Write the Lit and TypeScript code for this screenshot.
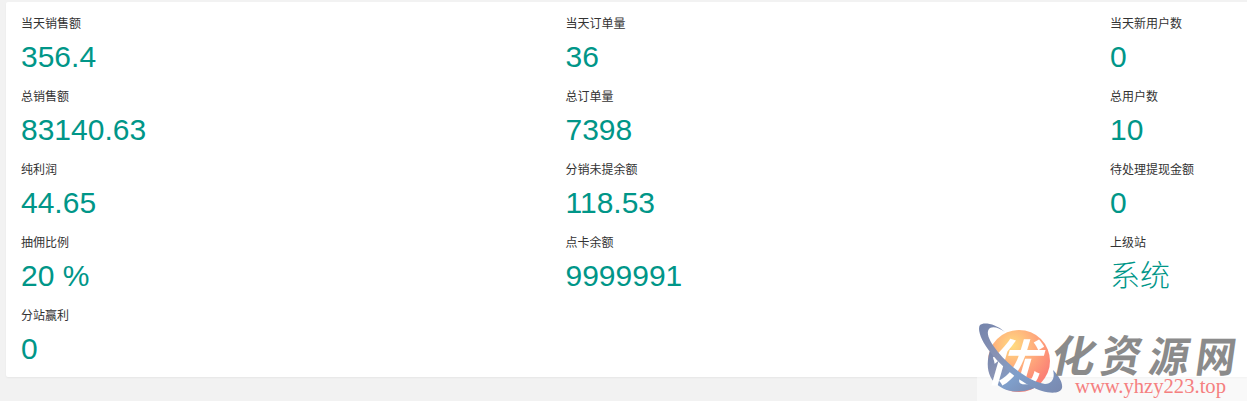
import { LitElement, html, css } from 'lit';

class StatItem extends LitElement {
  static properties = {
    label: { type: String },
    value: { type: String },
  };

  static styles = css`
    :host {
      display: block;
      height: 73px;
    }

    .label {
      font-size: 12px;
      line-height: 18px;
      color: #333;
    }

    .value {
      margin-top: 6px;
      font-size: 30px;
      line-height: 36px;
      font-weight: 300;
      color: #009688;
    }
  `;
  label: string;
  value: string;

  constructor() {
    super();
    this.label = '';
    this.value = '';
  }

  render() {
    return html`
      <div class="label">${this.label}</div>
      <div class="value">${this.value}</div>
    `;
  }
}

customElements.define('stat-item', StatItem);

class SiteWatermark extends LitElement {
  static styles = css`
    :host {
      display: block;
      background: rgba(255, 255, 255, 0.5);
    }

    svg {
      display: block;
    }

    .name {
      font-family: 'Noto Sans CJK SC', sans-serif;
      font-weight: 700;
      font-size: 40px;
      fill: #8b8b8b;
    }

    .mark {
      font-family: 'Noto Sans CJK SC', sans-serif;
      font-weight: 700;
      font-size: 50px;
      fill: #fff;
    }

    .url {
      font-family: 'Liberation Serif', serif;
      font-size: 22px;
      fill: #f58080;
    }
  `;

  render() {
    return html`
      <svg width="270" height="86" viewBox="0 0 270 86">
        <defs>
          <radialGradient id="sun" cx="0.4" cy="0.25" r="0.7">
            <stop offset="0" stop-color="#ffdc80" />
            <stop offset="0.5" stop-color="#ffad7c" />
            <stop offset="1" stop-color="#fb8175" />
          </radialGradient>
          <linearGradient id="ring" x1="0" y1="0" x2="1" y2="1">
            <stop offset="0" stop-color="#7484ac" />
            <stop offset="0.35" stop-color="#8993b4" />
            <stop offset="0.6" stop-color="#7f9fcb" />
            <stop offset="1" stop-color="#7988ae" />
          </linearGradient>
        </defs>
        <circle cx="42" cy="46" r="31" fill="url(#sun)" />
        <path d="M14 33C8 48 10 64 22 71C34 80 54 77 64 69C45 66 25 51 14 33Z" fill="url(#ring)" />
        <text class="mark" transform="translate(8 66) skewX(-16) scale(1.08 1)">优</text>
        <path
          d="M28 17C18 8 6 7 3 10C0 14 4 26 14 38C27 55 49 71 65 76C75 79 84 78 85 73C86 68 82 61 76 55C78 62 76 69 68 69C54 67 34 53 21 37C12 26 8 17 13 13C17 11 22 13 28 17Z"
          fill="url(#ring)"
        />
        <g class="name">
          <text transform="translate(72 57) skewX(-12) scale(1.1 1.08)">化</text>
          <text transform="translate(122 57) skewX(-10) scale(1 1.1)">资</text>
          <text transform="translate(170 57) skewX(-10) scale(1 1.05)">源</text>
          <text transform="translate(217 57) skewX(-8) scale(1 1.05)">网</text>
        </g>
        <text class="url" x="98" y="78" textLength="151" lengthAdjust="spacingAndGlyphs">www.yhzy223.top</text>
      </svg>
    `;
  }
}

customElements.define('site-watermark', SiteWatermark);

const stats = [
  ['当天销售额', '356.4'],
  ['当天订单量', '36'],
  ['当天新用户数', '0'],
  ['总销售额', '83140.63'],
  ['总订单量', '7398'],
  ['总用户数', '10'],
  ['纯利润', '44.65'],
  ['分销未提余额', '118.53'],
  ['待处理提现金额', '0'],
  ['抽佣比例', '20 %'],
  ['点卡余额', '9999991'],
  ['上级站', '系统'],
  ['分站赢利', '0'],
];

class AppRoot extends LitElement {
  static styles = css`
    :host {
      display: block;
      position: relative;
      box-sizing: border-box;
      height: 401px;
      padding: 2px 0 0 6px;
      overflow: hidden;
      background: #f2f2f2;
      font-family: 'Liberation Sans', 'Noto Sans CJK SC', sans-serif;
    }

    .card {
      box-sizing: border-box;
      height: 375px;
      padding: 13px 0 0 15px;
      background: #fff;
      border-radius: 2px 0 0 2px;
      box-shadow: 0 1px 2px rgba(0, 0, 0, 0.05);
    }

    /* The third column runs past the right edge of the window */
    .grid {
      display: grid;
      grid-template-columns: repeat(3, 544.5px);
    }

    site-watermark {
      position: absolute;
      right: 0;
      bottom: 0;
    }
  `;

  render() {
    return html`
      <div class="card">
        <div class="grid">
          ${stats.map(([label, value]) => html`<stat-item .label=${label} .value=${value}></stat-item>`)}
        </div>
      </div>
      <site-watermark></site-watermark>
    `;
  }
}

customElements.define('app-root', AppRoot);
